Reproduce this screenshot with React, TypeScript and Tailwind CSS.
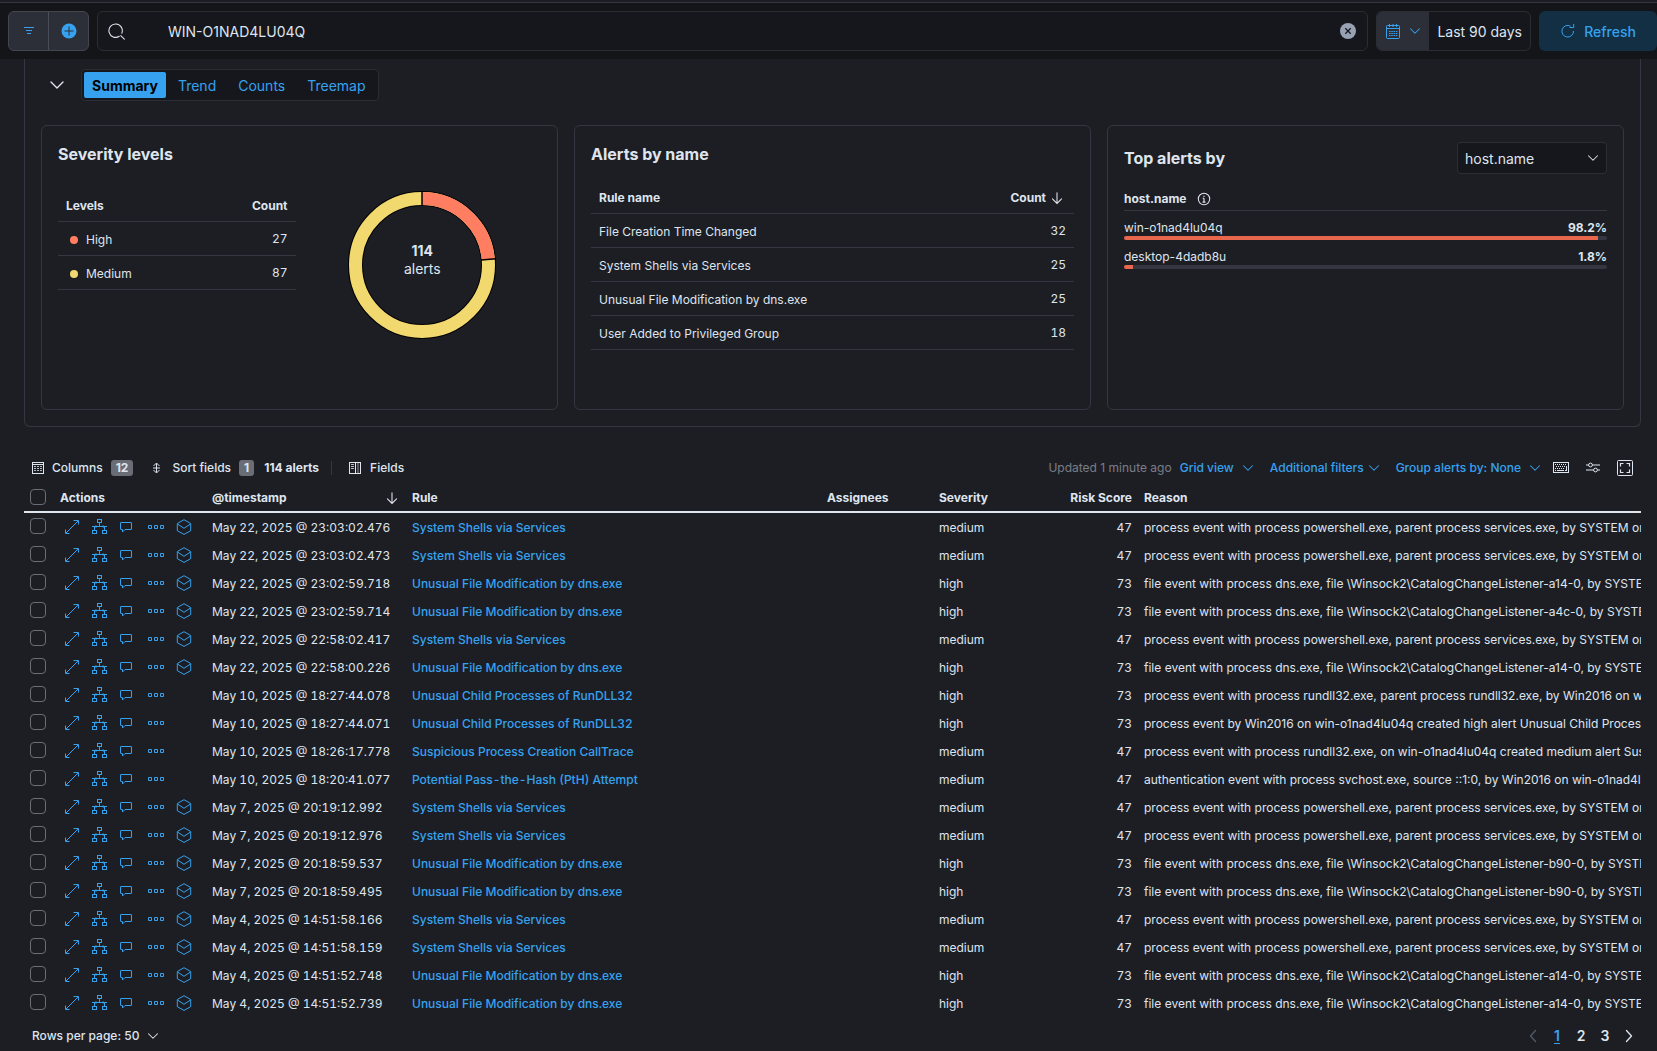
import type { ReactNode } from 'react'

interface IconProps {
  size?: number
  box?: number
  className?: string
  children: ReactNode
}

function Icon({ size = 16, box = 16, className = '', children }: IconProps) {
  return (
    <svg
      width={size}
      height={size}
      viewBox={`0 0 ${box} ${box}`}
      fill="none"
      stroke="currentColor"
      strokeWidth="1"
      className={`shrink-0 ${className}`}
      aria-hidden="true"
    >
      {children}
    </svg>
  )
}

const FilterIcon = () => (
  <Icon>
    <path d="M3 4.5h10M5 7.5h6M6 10.5h4" />
  </Icon>
)

const PlusCircleIcon = () => (
  <Icon>
    <circle cx="8" cy="8" r="7.5" fill="currentColor" stroke="none" />
    <path d="M8 3.5v9M3.5 8h9" stroke="#2c2e38" />
  </Icon>
)

const SearchIcon = () => (
  <Icon size={17}>
    <path d="M10.6 12.5A6.3 6.3 0 1 1 13 9.6M12 11.8l3.4 3.4" strokeLinecap="round" />
  </Icon>
)

const ClearIcon = () => (
  <Icon>
    <circle cx="8" cy="8" r="8" fill="#98a2b3" stroke="none" />
    <path d="M5.3 5.3l5.4 5.4M10.7 5.3l-5.4 5.4" stroke="#16171c" strokeWidth="1.3" />
  </Icon>
)

const CalendarIcon = () => (
  <Icon>
    <rect x="1.5" y="2.5" width="13" height="13" rx="1" />
    <path d="M1.5 5.5h13M4.5 1v3M8 1v3M11.5 1v3" />
    <path d="M4 8.5h8.5M4 10.5h8.5M4 12.5h8.5" strokeDasharray="1.5 0.8" />
  </Icon>
)

const ChevronDown = ({ size = 12, className = '' }: { size?: number; className?: string }) => (
  <Icon size={size} className={className}>
    <path d="M2 5l6 6 6-6" strokeWidth="1.4" strokeLinecap="round" strokeLinejoin="round" />
  </Icon>
)

const ChevronSide = ({ left }: { left?: boolean }) => (
  <Icon>
    <path d={left ? 'M10.5 2.5L5.5 8l5 5.5' : 'M5.5 2.5L10.5 8l-5 5.5'} strokeWidth="1.3" strokeLinecap="round" strokeLinejoin="round" />
  </Icon>
)

const RefreshIcon = () => (
  <Icon>
    <path d="M13.5 8A5.8 5.8 0 1 1 10.6 3.2M9.5 4.5h4.2V1" />
  </Icon>
)

const SortDownIcon = () => (
  <Icon size={14}>
    <path d="M8 2v12M2.8 9L8 14.2 13.2 9" strokeWidth="1.2" strokeLinecap="round" />
  </Icon>
)

const InfoIcon = () => (
  <Icon size={14}>
    <circle cx="8" cy="8" r="6.5" strokeWidth="1.2" />
    <path d="M8 7v4.5M6.5 7.2H8M6.3 11.5h3.4M8 4.2v1.4" strokeWidth="1.3" />
  </Icon>
)

const ColumnsIcon = () => (
  <Icon size={14} box={14}>
    <rect x="0.5" y="1.5" width="11" height="11" />
    <path d="M1 3.5h10" />
    <path d="M2 5.5h8M2 7.5h8M2 9.5h8" strokeDasharray="2 1" strokeOpacity="0.8" />
  </Icon>
)

const SortFieldsIcon = () => (
  <Icon size={14} box={14}>
    <path d="M7.5 2.5v9M4.5 5l3-3 3 3M4.5 9l3 3 3-3M4 7h7" />
  </Icon>
)

const FieldsIcon = () => (
  <Icon size={14} box={14}>
    <rect x="1.5" y="1.5" width="11" height="11" />
    <path d="M7.5 1.5v11" />
    <path d="M3 3.5h3M3 5.5h3M3 7.5h3" strokeOpacity="0.8" />
    <path d="M10 2v10" strokeWidth="2" strokeOpacity="0.3" />
  </Icon>
)

const KeyboardIcon = () => (
  <Icon>
    <rect x="0.5" y="2.5" width="15" height="10" />
    <path d="M2 4.5h11M3 6.5h10M2 8.5h10" strokeDasharray="1 1" />
    <path d="M2 10.5h1M4 10.5h7M12 10.5h2M13.5 6v4" />
  </Icon>
)

const ControlsIcon = () => (
  <Icon>
    <circle cx="5.5" cy="5" r="1.9" />
    <circle cx="10.5" cy="10" r="1.9" />
    <path d="M1 5h2.5M7.5 5H15M1 10h7.5M12.5 10H15" strokeWidth="1.2" />
  </Icon>
)

const FullScreenIcon = () => (
  <Icon>
    <rect x="0.5" y="0.5" width="15" height="15" rx="1" />
    <path d="M3.5 6.5v-3h3M9.5 3.5h3v3M12.5 9.5v3h-3M6.5 12.5h-3v-3" strokeWidth="1.2" />
  </Icon>
)

const ExpandIcon = () => (
  <Icon>
    <path d="M2 14L14 2M9.5 1.5h5v4M1.5 10.5v4h4" />
  </Icon>
)

const AnalyzeIcon = () => (
  <Icon>
    <rect x="5.5" y="0.5" width="4" height="3" />
    <rect x="0.5" y="11.5" width="4" height="3" />
    <rect x="10.5" y="11.5" width="4" height="3" />
    <path d="M7.5 3.5v4M0 7.5h15M2.5 7.5v4M12.5 7.5v4" />
    <path d="M4.2 6.3L3 7.5l1.2 1.2M10.8 6.3L12 7.5l-1.2 1.2" />
  </Icon>
)

const CommentIcon = () => (
  <Icon>
    <path d="M1 3.5h10a.5.5 0 0 1 .5.5v6a.5.5 0 0 1-.5.5H5L2.5 13v-2.5H1a.5.5 0 0 1-.5-.5V4a.5.5 0 0 1 .5-.5z" />
  </Icon>
)

const MoreIcon = () => (
  <Icon>
    <path d="M.5 6.5h3v3h-3zM6.5 6.5h3v3h-3zM12.5 6.5h3v3h-3z" />
  </Icon>
)

const SessionIcon = () => (
  <Icon>
    <path d="M8 .7l6.7 3.8v7.2L8 15.4l-6.7-3.7V4.5zM1.5 5L8 9.3 14.5 5" />
  </Icon>
)

interface Alert {
  time: string
  rule: string
  severity: 'medium' | 'high'
  reason: string
  session: boolean
}

const SHELLS = 'System Shells via Services'
const DNS = 'Unusual File Modification by dns.exe'
const RUNDLL = 'Unusual Child Processes of RunDLL32'

const shellsReason = 'process event with process powershell.exe, parent process services.exe, by SYSTEM on win-o1nad4lu04q'
const dnsReason = (id: string) => `file event with process dns.exe, file \\Winsock2\\CatalogChangeListener-${id}, by SYSTEM on win-o1nad4lu04q`

const alerts: Alert[] = [
  { time: 'May 22, 2025 @ 23:03:02.476', rule: SHELLS, severity: 'medium', reason: shellsReason, session: true },
  { time: 'May 22, 2025 @ 23:03:02.473', rule: SHELLS, severity: 'medium', reason: shellsReason, session: true },
  { time: 'May 22, 2025 @ 23:02:59.718', rule: DNS, severity: 'high', reason: dnsReason('a14-0'), session: true },
  { time: 'May 22, 2025 @ 23:02:59.714', rule: DNS, severity: 'high', reason: dnsReason('a4c-0'), session: true },
  { time: 'May 22, 2025 @ 22:58:02.417', rule: SHELLS, severity: 'medium', reason: shellsReason, session: true },
  { time: 'May 22, 2025 @ 22:58:00.226', rule: DNS, severity: 'high', reason: dnsReason('a14-0'), session: true },
  { time: 'May 10, 2025 @ 18:27:44.078', rule: RUNDLL, severity: 'high', reason: 'process event with process rundll32.exe, parent process rundll32.exe, by Win2016 on win-o1nad4lu04q', session: false },
  { time: 'May 10, 2025 @ 18:27:44.071', rule: RUNDLL, severity: 'high', reason: 'process event by Win2016 on win-o1nad4lu04q created high alert Unusual Child Processes of RunDLL32.', session: false },
  { time: 'May 10, 2025 @ 18:26:17.778', rule: 'Suspicious Process Creation CallTrace', severity: 'medium', reason: 'process event with process rundll32.exe, on win-o1nad4lu04q created medium alert Suspicious Process Creation CallTrace.', session: false },
  { time: 'May 10, 2025 @ 18:20:41.077', rule: 'Potential Pass-the-Hash (PtH) Attempt', severity: 'medium', reason: 'authentication event with process svchost.exe, source ::1:0, by Win2016 on win-o1nad4lu04q', session: false },
  { time: 'May 7, 2025 @ 20:19:12.992', rule: SHELLS, severity: 'medium', reason: shellsReason, session: true },
  { time: 'May 7, 2025 @ 20:19:12.976', rule: SHELLS, severity: 'medium', reason: shellsReason, session: true },
  { time: 'May 7, 2025 @ 20:18:59.537', rule: DNS, severity: 'high', reason: dnsReason('b90-0'), session: true },
  { time: 'May 7, 2025 @ 20:18:59.495', rule: DNS, severity: 'high', reason: dnsReason('b90-0'), session: true },
  { time: 'May 4, 2025 @ 14:51:58.166', rule: SHELLS, severity: 'medium', reason: shellsReason, session: true },
  { time: 'May 4, 2025 @ 14:51:58.159', rule: SHELLS, severity: 'medium', reason: shellsReason, session: true },
  { time: 'May 4, 2025 @ 14:51:52.748', rule: DNS, severity: 'high', reason: dnsReason('a14-0'), session: true },
  { time: 'May 4, 2025 @ 14:51:52.739', rule: DNS, severity: 'high', reason: dnsReason('a14-0'), session: true },
]

const levels = [
  { name: 'High', count: 27, dot: 'bg-[#ff7e62]' },
  { name: 'Medium', count: 87, dot: 'bg-[#f1d86f]' },
]

const ruleCounts = [
  { name: 'File Creation Time Changed', count: 32 },
  { name: SHELLS, count: 25 },
  { name: DNS, count: 25 },
  { name: 'User Added to Privileged Group', count: 18 },
]

const hosts = [
  { name: 'win-o1nad4lu04q', percent: 98.2 },
  { name: 'desktop-4dadb8u', percent: 1.8 },
]

const riskScore = { medium: 47, high: 73 }

function TopBar() {
  return (
    <header className="flex h-[57px] items-center gap-2 border-t border-[#343741] bg-[#141519] pl-2">
      <div className="flex h-10 w-[81px] shrink-0 overflow-hidden rounded-md border border-[#43464f] bg-[#2c2e38] text-[#36a2ef]">
        <button aria-label="Saved query menu" className="flex flex-1 items-center justify-center border-r border-[#4a4d57]">
          <FilterIcon />
        </button>
        <button aria-label="Add filter" className="flex flex-1 items-center justify-center">
          <PlusCircleIcon />
        </button>
      </div>
      <div className="flex h-10 min-w-0 flex-1 items-center rounded-md border border-[#2b2d35] bg-[#16171c] pr-[11px] pl-2.5 text-[#dfe5ef]">
        <SearchIcon />
        <input
          aria-label="Search query"
          defaultValue="WIN-O1NAD4LU04Q"
          className="min-w-0 flex-1 bg-transparent pt-0.5 pl-[43px] text-sm outline-none"
        />
        <button aria-label="Clear input">
          <ClearIcon />
        </button>
      </div>
      <div className="flex h-10 shrink-0 overflow-hidden rounded-md border border-[#2b2d35] bg-[#16171c]">
        <button aria-label="Date quick select" className="flex w-[52px] items-center justify-center gap-2 bg-[#2c2e38] text-[#36a2ef]">
          <CalendarIcon />
          <ChevronDown />
        </button>
        <button className="px-2 pt-0.5 text-sm text-[#dfe5ef]">Last 90 days</button>
      </div>
      <button className="flex h-10 w-[118px] shrink-0 items-center justify-center gap-2 rounded-md bg-[#122f44] text-sm font-medium text-[#36a2ef]">
        <RefreshIcon />
        <span className="pt-0.5">Refresh</span>
      </button>
    </header>
  )
}

function ChartTabs() {
  return (
    <div className="flex items-center gap-4 pl-2">
      <button aria-label="Collapse charts" className="flex h-8 w-4 items-center justify-center">
        <ChevronDown size={16} />
      </button>
      <div className="flex h-8 items-center rounded-[4px] border border-[#2b2d35] bg-[#16171c] p-0.5 text-sm text-[#36a2ef]">
        <button className="h-[26px] rounded-[2px] bg-[#36a2ef] px-2 pt-0.5 font-bold text-black">Summary</button>
        <button className="h-[26px] pt-0.5 pr-2.5 pl-3">Trend</button>
        <button className="h-[26px] pt-0.5 pr-2.5 pl-3">Counts</button>
        <button className="h-[26px] pt-0.5 pr-2.5 pl-3">Treemap</button>
      </div>
    </div>
  )
}

function Donut() {
  // radius of the ring's middle line, and its full length
  const r = 66.5
  const c = 2 * Math.PI * r
  const high = (27 / 114) * c
  return (
    <div className="grid place-items-center">
      <svg viewBox="0 0 148 148" className="col-start-1 row-start-1 size-[148px]" role="img" aria-label="114 alerts">
        <circle cx="74" cy="74" r={r} fill="none" stroke="#000" strokeWidth="15" />
        <circle cx="74" cy="74" r={r} fill="none" stroke="#f1d86f" strokeWidth="13" />
        <circle cx="74" cy="74" r={r} fill="none" stroke="#ff7e62" strokeWidth="13" strokeDasharray={`${high} ${c}`} transform="rotate(-90 74 74)" />
        <path d="M74 0v15M133 69l15-1.2" stroke="#000" strokeWidth="1.5" />
      </svg>
      <p className="col-start-1 row-start-1 pb-2.5 text-center text-sm leading-[18px]">
        <strong className="block font-bold">114</strong>
        alerts
      </p>
    </div>
  )
}

function SeverityCard() {
  return (
    <section className="h-[285px] rounded-md border border-[#343741] p-4">
      <h2 className="text-base leading-6 font-bold">Severity levels</h2>
      <div className="grid grid-cols-2 gap-2">
        <table className="mt-[22px] w-full self-start text-xs">
          <thead>
            <tr className="h-[33px] border-b border-[#343741]">
              <th className="px-2 pt-1 text-left font-bold">Levels</th>
              <th className="px-2 pt-1 text-right font-bold">Count</th>
            </tr>
          </thead>
          <tbody>
            {levels.map((level) => (
              <tr key={level.name} className="h-[34px] border-b border-[#343741]">
                <td className="px-3 pt-1">
                  <span className="flex items-center gap-2">
                    <span className={`size-2 rounded-full ${level.dot}`} />
                    {level.name}
                  </span>
                </td>
                <td className="px-2 pt-0.5 text-right tabular-nums">{level.count}</td>
              </tr>
            ))}
          </tbody>
        </table>
        <div className="mt-[25px]">
          <Donut />
        </div>
      </div>
    </section>
  )
}

function RuleCard() {
  return (
    <section className="h-[285px] rounded-md border border-[#343741] p-4">
      <h2 className="text-base leading-6 font-bold">Alerts by name</h2>
      <table className="mt-3.5 w-full text-xs">
        <thead>
          <tr className="h-[33px] border-b border-[#343741]">
            <th className="px-2 pt-1 text-left font-bold">Rule name</th>
            <th className="px-2 pt-1 text-right font-bold">
              <button className="inline-flex items-center gap-1 pr-0.5">
                Count
                <SortDownIcon />
              </button>
            </th>
          </tr>
        </thead>
        <tbody>
          {ruleCounts.map((rule) => (
            <tr key={rule.name} className="h-[34px] border-b border-[#343741]">
              <td className="px-2 pt-1">{rule.name}</td>
              <td className="px-2 pt-0.5 text-right tabular-nums">{rule.count}</td>
            </tr>
          ))}
        </tbody>
      </table>
    </section>
  )
}

function TopAlertsCard() {
  return (
    <section className="h-[285px] rounded-md border border-[#343741] p-4">
      <div className="flex items-center justify-between">
        <h2 className="text-base font-bold">Top alerts by</h2>
        <div className="relative">
          <select aria-label="Top alerts by" className="h-8 w-[150px] appearance-none rounded-[4px] border border-[#2b2d35] bg-[#16171c] px-[7px] pt-0.5 text-sm text-[#dfe5ef]">
            <option>host.name</option>
          </select>
          <ChevronDown className="pointer-events-none absolute top-2.5 right-2" />
        </div>
      </div>
      <h3 className="mt-4 flex items-center gap-2.5 border-b border-[#343741] pb-0.5 text-xs leading-[18px] font-bold">
        host.name
        <InfoIcon />
      </h3>
      <ul className="mt-2 flex flex-col gap-2 text-xs">
        {hosts.map((host) => (
          <li key={host.name}>
            <div className="flex justify-between leading-[17px]">
              <span>{host.name}</span>
              <span className="font-bold">{host.percent}%</span>
            </div>
            <div className="h-1 overflow-hidden rounded-[2px] bg-[#343741]">
              <div className="h-1 bg-[#e7664c]" style={{ width: `${host.percent}%` }} />
            </div>
          </li>
        ))}
      </ul>
    </section>
  )
}

function GridToolbar() {
  return (
    <div className="flex h-7 items-center px-2 pt-0.5 text-xs font-medium">
      <button className="flex items-center gap-1.5">
        <ColumnsIcon />
        Columns
        <span className="ml-0.5 rounded-[3px] bg-[#6a6d76] px-[5px] leading-4 font-bold">12</span>
      </button>
      <button className="ml-4 flex items-center gap-1.5">
        <SortFieldsIcon />
        <span className="pl-[3px]">Sort fields</span>
        <span className="ml-0.5 rounded-[3px] bg-[#6a6d76] px-[5px] leading-4 font-bold">1</span>
      </button>
      <span className="ml-2.5 font-bold">114 alerts</span>
      <span className="mx-3 h-3.5 w-px bg-[#343741]" />
      <button className="ml-1 flex items-center gap-2">
        <FieldsIcon />
        Fields
      </button>
      <div className="ml-auto flex items-center">
        <span className="font-normal text-[#7a7e88]">Updated 1 minute ago</span>
        <button className="ml-2 flex items-center gap-2 text-[#36a2ef]">
          Grid view
          <ChevronDown />
        </button>
        <button className="ml-4 flex items-center gap-1 text-[#36a2ef]">
          Additional filters
          <ChevronDown />
        </button>
        <button className="ml-4 flex items-center gap-2 text-[#36a2ef]">
          Group alerts by: None
          <ChevronDown />
        </button>
        <button aria-label="Keyboard shortcuts" className="ml-3"><KeyboardIcon /></button>
        <button aria-label="Display options" className="ml-4"><ControlsIcon /></button>
        <button aria-label="Full screen" className="ml-4"><FullScreenIcon /></button>
      </div>
    </div>
  )
}

function Checkbox({ label }: { label: string }) {
  return (
    <input
      type="checkbox"
      aria-label={label}
      className="block size-4 appearance-none rounded-[4px] border border-[#6a6d76] bg-transparent"
    />
  )
}

function AlertRow({ alert }: { alert: Alert }) {
  return (
    <tr className="h-7">
      <td className="px-1.5 pb-0.5"><Checkbox label={`Select ${alert.time}`} /></td>
      <td className="px-2.5">
        <div className="flex items-center gap-3 text-[#36a2ef]">
          <button aria-label="View details"><ExpandIcon /></button>
          <button aria-label="Analyze event"><AnalyzeIcon /></button>
          <button aria-label="Add note"><CommentIcon /></button>
          <button aria-label="More actions"><MoreIcon /></button>
          {alert.session && <button aria-label="Open session viewer"><SessionIcon /></button>}
        </div>
      </td>
      <td className="px-1.5 pt-0.5 tabular-nums">{alert.time}</td>
      <td className="px-1.5 pt-0.5"><a href="#" className="font-medium text-[#36a2ef] tabular-nums">{alert.rule}</a></td>
      <td />
      <td className="px-1.5 pt-0.5">{alert.severity}</td>
      <td className="px-1.5 pt-0.5 text-right tabular-nums">{riskScore[alert.severity]}</td>
      <td className="overflow-hidden pt-0.5 pl-1.5">{alert.reason}</td>
    </tr>
  )
}

function AlertsTable() {
  const th = 'border-b-2 border-[#dfe5ef] px-1.5 pt-1 font-bold'
  return (
    <table className="w-full table-fixed border-separate border-spacing-0 text-left text-xs whitespace-nowrap">
      <colgroup>
        <col className="w-[30px]" />
        <col className="w-[152px]" />
        <col className="w-[200px]" />
        <col className="w-[415px]" />
        <col className="w-28" />
        <col className="w-28" />
        <col className="w-[93px]" />
        <col />
      </colgroup>
      <thead>
        <tr className="h-8">
          <th className="border-b-2 border-[#dfe5ef] px-1.5 pt-0.5"><Checkbox label="Select all rows" /></th>
          <th className={th}>Actions</th>
          <th className={th}>
            <span className="flex items-center justify-between pr-px">
              @timestamp
              <SortDownIcon />
            </span>
          </th>
          <th className={th}>Rule</th>
          <th className={th}>Assignees</th>
          <th className={th}>Severity</th>
          <th className={`${th} text-right`}>Risk Score</th>
          <th className={th}>Reason</th>
        </tr>
      </thead>
      <tbody>
        {alerts.map((alert) => (
          <AlertRow key={alert.time} alert={alert} />
        ))}
      </tbody>
    </table>
  )
}

function Pagination() {
  return (
    <footer className="flex items-center justify-between pt-1 pl-2 text-xs font-medium">
      <button className="flex h-7 items-center gap-2 pt-0.5">
        Rows per page: 50
        <ChevronDown />
      </button>
      <nav aria-label="Pagination" className="flex items-center pt-0.5 text-sm font-semibold">
        <button aria-label="Previous page" className="flex w-6 justify-center text-[#535966]" disabled><ChevronSide left /></button>
        <a href="#" className="w-6 text-center text-[#36a2ef] underline underline-offset-2">1</a>
        <a href="#" className="w-6 text-center">2</a>
        <a href="#" className="w-6 text-center">3</a>
        <button aria-label="Next page" className="flex w-6 justify-center"><ChevronSide /></button>
      </nav>
    </footer>
  )
}

export default function App() {
  return (
    <div className="min-h-screen bg-[#1d1e24] pt-0.5 font-[Inter,sans-serif] text-[#dfe5ef]">
      <TopBar />
      <main className="px-6 pr-4">
        <div className="rounded-b-md border border-t-0 border-[#343741] px-4 pt-2.5 pb-4">
          <ChartTabs />
          <div className="mt-6 grid grid-cols-3 gap-4">
            <SeverityCard />
            <RuleCard />
            <TopAlertsCard />
          </div>
        </div>
        <div className="mt-[26px]">
          <GridToolbar />
          <AlertsTable />
          <Pagination />
        </div>
      </main>
    </div>
  )
}
